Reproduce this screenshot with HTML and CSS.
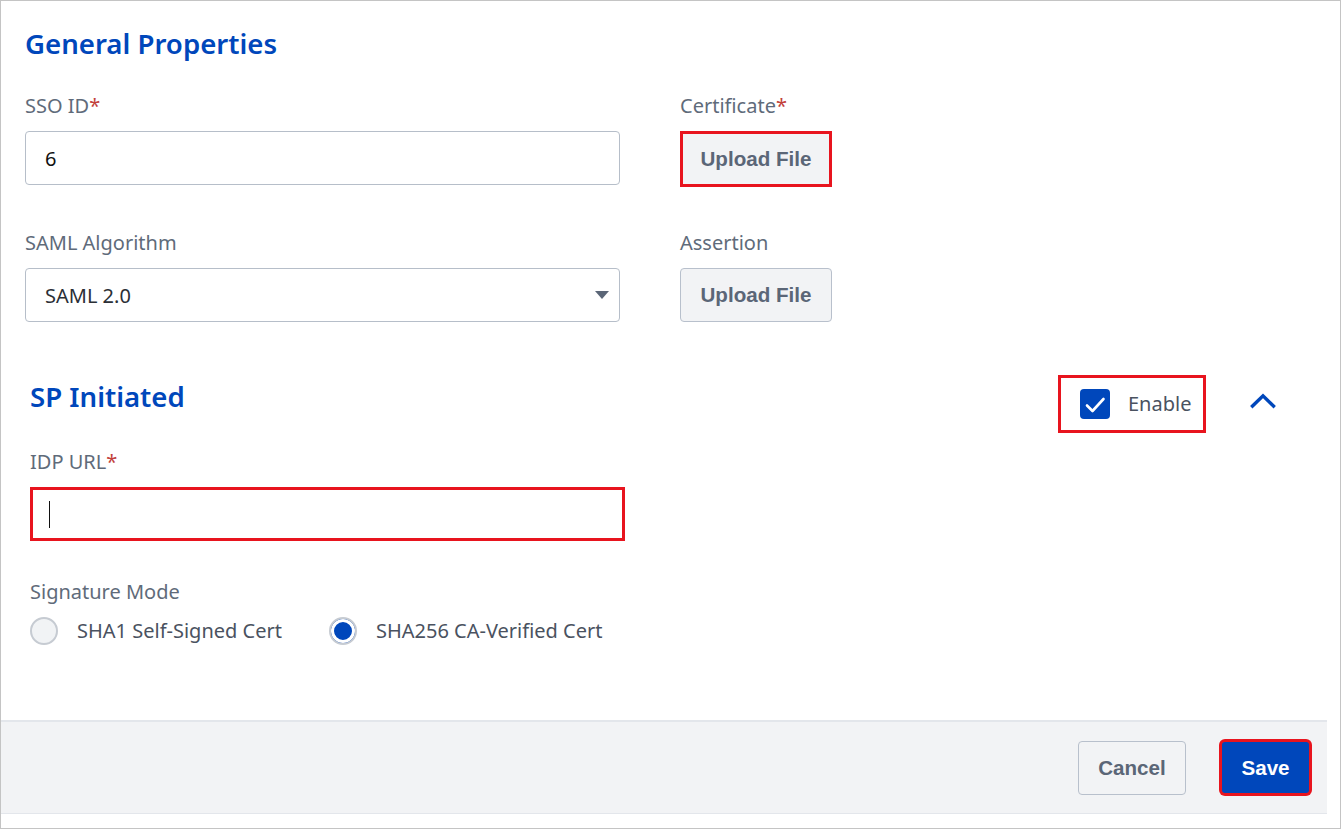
FILE: index.html
```html
<!DOCTYPE html>
<html lang="en">
<head>
<meta charset="utf-8">
<title>SSO Settings</title>
<link rel="stylesheet" href="styles.css">
</head>
<body>
<div class="frame">
  <main class="content">
    <section class="general">
      <h2 class="section-title">General Properties</h2>
      <div class="grid">
        <div class="field">
          <label class="label">SSO ID<span class="req">*</span></label>
          <div class="input"><span class="value">6</span></div>
        </div>
        <div class="field">
          <label class="label">Certificate<span class="req">*</span></label>
          <button class="upload annotated">Upload File</button>
        </div>
        <div class="field">
          <label class="label">SAML Algorithm</label>
          <div class="input select"><span class="value dark">SAML 2.0</span><span class="caret"></span></div>
        </div>
        <div class="field">
          <label class="label">Assertion</label>
          <button class="upload">Upload File</button>
        </div>
      </div>
    </section>

    <section class="sp">
      <div class="sp-header">
        <h2 class="section-title sp-title">SP Initiated</h2>
        <div class="enable">
          <span class="checkbox">
            <svg width="30" height="30" viewBox="0 0 30 30"><polyline points="7,16.5 12.5,22 23.5,10" fill="none" stroke="#fff" stroke-width="2.6" stroke-linecap="round" stroke-linejoin="round"/></svg>
          </span>
          <span class="enable-text">Enable</span>
        </div>
        <button class="collapse" aria-label="Collapse">
          <svg width="26" height="16" viewBox="0 0 26 16"><polyline points="2.5,13 13,2.8 23.5,13" fill="none" stroke="#0047bb" stroke-width="3.4" stroke-linecap="square" stroke-linejoin="miter"/></svg>
        </button>
      </div>

      <div class="field idp">
        <label class="label">IDP URL<span class="req">*</span></label>
        <div class="input url"><span class="text-caret"></span></div>
      </div>

      <div class="field sig">
        <label class="label">Signature Mode</label>
        <div class="radios">
          <label class="radio"><span class="dot"></span><span class="radio-text">SHA1 Self-Signed Cert</span></label>
          <label class="radio checked"><span class="dot"></span><span class="radio-text">SHA256 CA-Verified Cert</span></label>
        </div>
      </div>
    </section>
  </main>

  <footer class="footer">
    <button class="btn cancel">Cancel</button>
    <button class="btn save">Save</button>
  </footer>
</div>
</body>
</html>
```

FILE: styles.css
```css
* { box-sizing: border-box; }

html, body {
  margin: 0;
  padding: 0;
  background: #ffffff;
}

body {
  font-family: "Noto Sans", "Open Sans", sans-serif;
}

.frame {
  width: 1341px;
  height: 829px;
  border: 1px solid #c4c4c4;
  display: flex;
  flex-direction: column;
  background: #fff;
}

.content {
  flex: 1;
  padding: 25px 0 0 24px;
}

.section-title {
  margin: 0;
  font-size: 27.6px;
  line-height: 34px;
  font-weight: 600;
  color: #0047bb;
}

.grid {
  margin-top: 32px;
  display: grid;
  grid-template-columns: 595px 152px;
  column-gap: 60px;
  row-gap: 42px;
  align-items: start;
}

.field {
  display: flex;
  flex-direction: column;
}

.label {
  font-size: 20px;
  line-height: 28px;
  color: #5f6b7a;
  margin-bottom: 11px;
}

.req {
  color: #c2403a;
}

.input {
  height: 54px;
  border: 1px solid #b6bec9;
  border-radius: 4px;
  display: flex;
  align-items: center;
  padding: 0 19px;
  background: #fff;
}

.value {
  font-size: 20px;
  color: #111;
}

.value.dark {
  color: #2b2f36;
}

.select {
  justify-content: space-between;
  padding-right: 10px;
}

.caret {
  width: 0;
  height: 0;
  border-left: 7px solid transparent;
  border-right: 7px solid transparent;
  border-top: 8px solid #5b6677;
}

.upload {
  width: 152px;
  height: 54px;
  border: 1px solid #b8c0cc;
  border-radius: 4px;
  background: #f2f3f5;
  font-family: "Liberation Sans", Arial, sans-serif;
  font-weight: 700;
  font-size: 20.6px;
  color: #5b6677;
  padding: 0;
}

.upload.annotated {
  height: 56px;
  border: 3px solid #e8141e;
  border-radius: 0;
  background: #f2f3f5;
}

/* SP Initiated */
.sp {
  margin-top: 53px;
  padding-left: 5px;
}

.sp-header {
  display: flex;
  align-items: flex-start;
  height: 57px;
  padding-right: 57px;
}

.sp-title {
  flex: 1;
  margin-top: 4px;
}

.enable {
  width: 148px;
  height: 58px;
  border: 3px solid #e8141e;
  display: flex;
  align-items: center;
  padding-left: 19px;
  gap: 18px;
}

.checkbox {
  width: 30px;
  height: 30px;
  border-radius: 4px;
  background: #0047bb;
  display: block;
}

.checkbox svg {
  display: block;
}

.enable-text {
  font-size: 20px;
  color: #4a5260;
  line-height: 28px;
}

.collapse {
  margin-left: 37px;
  width: 40px;
  height: 40px;
  margin-top: 6px;
  border: 0;
  background: transparent;
  padding: 0;
  display: flex;
  align-items: center;
  justify-content: center;
}

.collapse svg {
  display: block;
}

.idp {
  margin-top: 16px;
  width: 595px;
}

.url {
  border: 3px solid #e8141e;
  border-radius: 0;
  padding-left: 16px;
}

.text-caret {
  width: 1px;
  height: 27px;
  background: #111;
}

.sig {
  margin-top: 37px;
}

.sig .label {
  margin-bottom: 10px;
}

.radios {
  display: flex;
  align-items: center;
  gap: 47px;
}

.radio {
  display: flex;
  align-items: center;
  gap: 19px;
  height: 30px;
}

.dot {
  width: 28px;
  height: 28px;
  border-radius: 50%;
  border: 2px solid #c6cbd2;
  background: #f1f3f5;
  display: block;
}

.radio.checked .dot {
  background: #0047bb;
  box-shadow: inset 0 0 0 3px #ffffff;
}

.radio-text {
  font-size: 20px;
  color: #4a5260;
  line-height: 28px;
}

/* footer */
.footer {
  height: 94px;
  margin-right: 13px;
  margin-bottom: 14px;
  background: #f2f3f5;
  border-top: 2px solid #e3e6eb;
  border-bottom: 1px solid #e3e6eb;
  display: flex;
  align-items: center;
  justify-content: flex-end;
  padding-right: 18px;
  gap: 36px;
}

.btn {
  font-family: "Liberation Sans", Arial, sans-serif;
  font-weight: 700;
  font-size: 20.6px;
  border-radius: 4px;
  padding: 0;
}

.cancel {
  width: 108px;
  height: 54px;
  background: #f2f3f5;
  border: 1px solid #b8c0cc;
  color: #5b6677;
}

.save {
  width: 87px;
  height: 51px;
  background: #0047bb;
  border: 0;
  color: #fff;
  border-radius: 3px;
  box-shadow: 0 0 0 3px #e8141e;
}
```
